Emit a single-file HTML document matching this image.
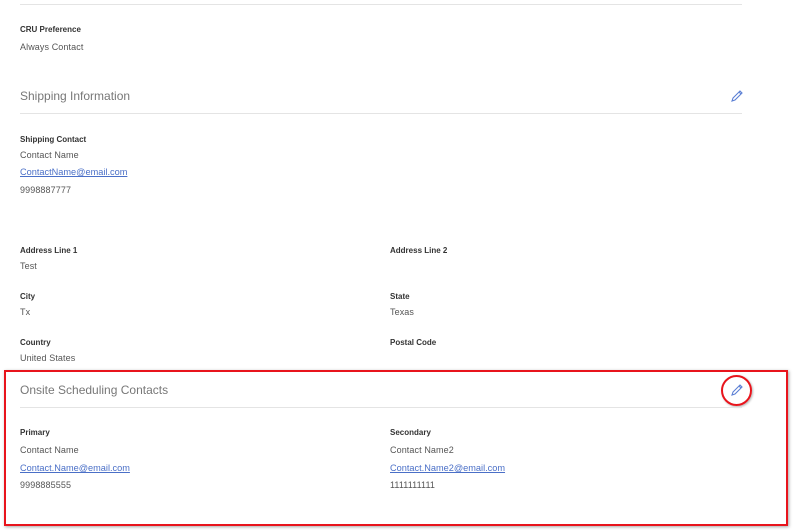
<!DOCTYPE html>
<html><head><meta charset="utf-8"><style>
*{margin:0;padding:0;box-sizing:border-box}
body{width:800px;height:530px;background:#fff;font-family:"Liberation Sans",sans-serif;position:relative;overflow:hidden;color:#444}
.a{position:absolute;white-space:nowrap}
.lbl{font-size:8px;font-weight:bold;color:#333}
.val{font-size:9px;color:#555;letter-spacing:0.1px;margin-top:1px}
.lnk{font-size:9.2px;color:#4a6fc7;text-decoration:underline;margin-top:1px}
.h{font-size:12px;color:#777}
.line{position:absolute;left:20px;width:722px;height:1px;background:#e4e4e4}
.pen{position:absolute;width:14px;height:14px}
</style></head><body>
<div class="line" style="top:4px"></div>
<div class="a lbl" style="left:20px;top:25px">CRU Preference</div>
<div class="a val" style="left:20px;top:41px">Always Contact</div>

<div class="a h" style="left:20px;top:89px">Shipping Information</div>
<svg class="pen" style="left:730px;top:89px" viewBox="0 0 14 14"><path d="M2 12 L3 9 L10 2 L12 4 L5 11 Z M9 3 L11 5" fill="none" stroke="#5b7fd4" stroke-width="1.1"/></svg>
<div class="line" style="top:113px"></div>

<div class="a lbl" style="left:20px;top:135px">Shipping Contact</div>
<div class="a val" style="left:20px;top:149px">Contact Name</div>
<div class="a lnk" style="left:20px;top:166px">ContactName@email.com</div>
<div class="a val" style="left:20px;top:184px">9998887777</div>

<div class="a lbl" style="left:20px;top:246px">Address Line 1</div>
<div class="a val" style="left:20px;top:260px">Test</div>
<div class="a lbl" style="left:390px;top:246px">Address Line 2</div>
<div class="a lbl" style="left:20px;top:292px">City</div>
<div class="a val" style="left:20px;top:306px">Tx</div>
<div class="a lbl" style="left:390px;top:292px">State</div>
<div class="a val" style="left:390px;top:306px">Texas</div>
<div class="a lbl" style="left:20px;top:338px">Country</div>
<div class="a val" style="left:20px;top:352px">United States</div>
<div class="a lbl" style="left:390px;top:338px">Postal Code</div>

<div class="a h" style="left:20px;top:383px">Onsite Scheduling Contacts</div>
<svg class="pen" style="left:730px;top:383px" viewBox="0 0 14 14"><path d="M2 12 L3 9 L10 2 L12 4 L5 11 Z M9 3 L11 5" fill="none" stroke="#5b7fd4" stroke-width="1.1"/></svg>
<div style="position:absolute;left:721px;top:375px;width:31px;height:31px;border:2px solid #e8141c;border-radius:50%;box-shadow:1px 1px 2px rgba(0,0,0,.3)"></div>
<div class="line" style="top:407px"></div>

<div class="a lbl" style="left:20px;top:428px">Primary</div>
<div class="a val" style="left:20px;top:444px">Contact Name</div>
<div class="a lnk" style="left:20px;top:462px">Contact.Name@email.com</div>
<div class="a val" style="left:20px;top:479px">9998885555</div>
<div class="a lbl" style="left:390px;top:428px">Secondary</div>
<div class="a val" style="left:390px;top:444px">Contact Name2</div>
<div class="a lnk" style="left:390px;top:462px">Contact.Name2@email.com</div>
<div class="a val" style="left:390px;top:479px">1111111111</div>

<div style="position:absolute;left:4px;top:370px;width:784px;height:156px;border:2px solid #e8141c;box-shadow:1px 1px 3px rgba(0,0,0,.35)"></div>
</body></html>
